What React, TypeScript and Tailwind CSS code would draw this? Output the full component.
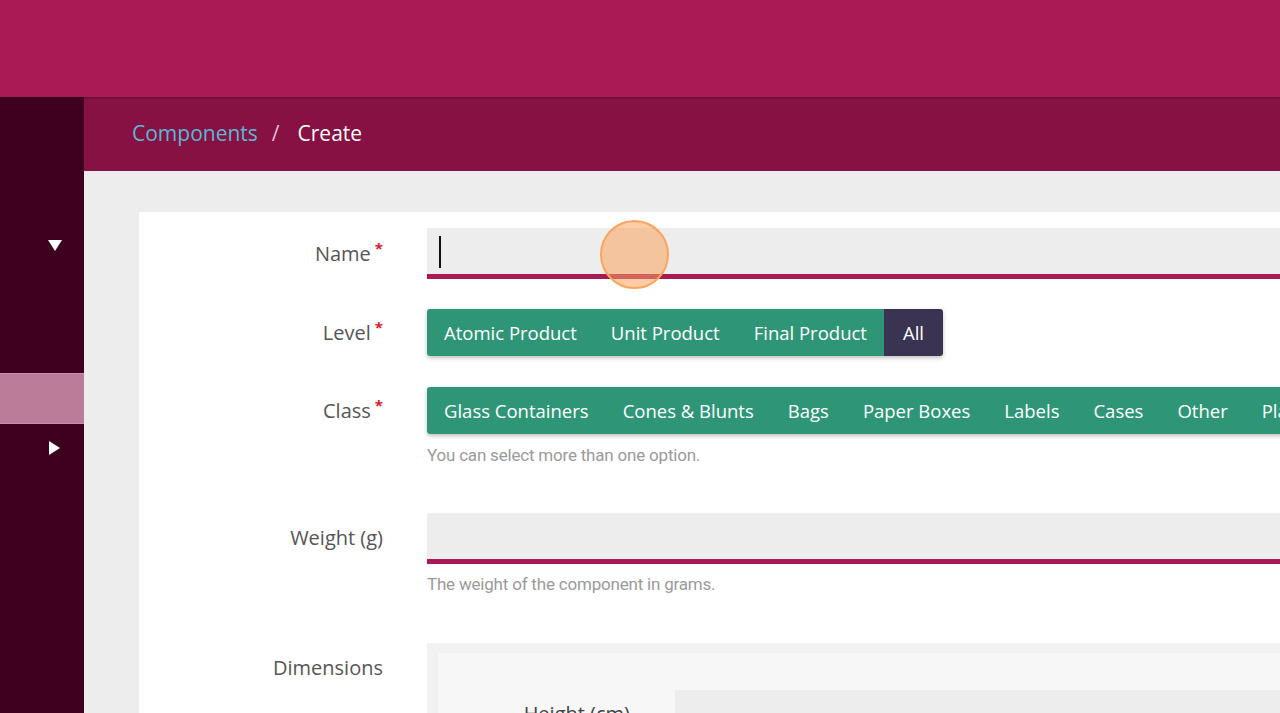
import React from "react";

const font = { fontFamily: '"Open Sans", "Liberation Sans", sans-serif' };

function Label({ text, required }: { text: string; required?: boolean }) {
  return (
    <div className="w-[288px] shrink-0 pr-[44px] text-right text-[20px] text-[#555555] leading-none">
      {text}
      {required && <span className="relative top-[-7px] ml-[4px] text-[15px] font-bold text-[#e0161e]">*</span>}
    </div>
  );
}

function Input({ cursor }: { cursor?: boolean }) {
  return (
    <div className="flex-1 h-[51px] bg-[#ededed] border-b-[5px] border-[#a91a54] flex items-center pl-[12px]">
      {cursor && <div className="w-[2px] h-[32px] bg-[#111] mt-[2px]" />}
    </div>
  );
}

function Group({ items, dark }: { items: string[]; dark?: string }) {
  return (
    <div className="flex h-[47px] rounded-[3px] overflow-hidden shadow-[0_2px_4px_rgba(0,0,0,0.25)] shrink-0 whitespace-nowrap">
      {items.map((t) => (
        <div key={t} className="bg-[#2e9676] text-white text-[18.5px] px-[17px] flex items-center">
          {t}
        </div>
      ))}
      {dark && (
        <div className="bg-[#3a3352] text-white text-[18.5px] px-[19px] flex items-center">{dark}</div>
      )}
    </div>
  );
}

const helper = { fontFamily: '"Roboto", sans-serif' };

export default function App() {
  return (
    <div style={font} className="w-[1280px] h-[713px] overflow-hidden relative bg-[#ededed]">
      <div className="h-[97px] bg-[#aa1a55] shadow-[0_1px_2px_rgba(0,0,0,0.3)] relative z-10" />
      <div className="flex h-[616px]">
        <aside className="w-[84px] shrink-0 bg-[#3f0020] relative">
          <div className="absolute left-[48px] top-[143px] w-0 h-0 border-l-[7px] border-r-[7px] border-t-[11px] border-l-transparent border-r-transparent border-t-white" />
          <div className="absolute left-0 right-0 top-[276px] h-[51px] bg-[#bb7c99] border-y border-[#c98fa9]" />
          <div className="absolute left-[49px] top-[344px] w-0 h-0 border-t-[7px] border-b-[7px] border-l-[11px] border-t-transparent border-b-transparent border-l-white" />
        </aside>
        <main className="flex-1 flex flex-col min-w-0">
          <div className="h-[74px] bg-[#861142] flex items-center pl-[48px] text-[21px] shrink-0">
            <span className="text-[#5bb8d5]">Components</span>
            <span className="text-[#e3bfcf] ml-[14px] mr-[18px]">/</span>
            <span className="text-white">Create</span>
          </div>
          <div className="flex-1 pl-[55px] pt-[41px] overflow-hidden">
            <div className="bg-white h-full pt-[16px] relative">
              <div className="flex items-center">
                <Label text="Name" required />
                <Input cursor />
              </div>
              <div className="flex items-center mt-[30px]">
                <Label text="Level" required />
                <Group items={["Atomic Product", "Unit Product", "Final Product"]} dark="All" />
              </div>
              <div className="flex items-center mt-[31px]">
                <Label text="Class" required />
                <Group items={["Glass Containers", "Cones & Blunts", "Bags", "Paper Boxes", "Labels", "Cases", "Other", "Plastic"]} />
              </div>
              <div className="pl-[288px] mt-[9px] text-[17px] text-[#9a9a9a] tracking-[-0.2px]" style={helper}>
                You can select more than one option.
              </div>
              <div className="flex items-center mt-[44px]">
                <Label text="Weight (g)" />
                <Input />
              </div>
              <div className="pl-[288px] mt-[8px] text-[17px] text-[#9a9a9a] tracking-[-0.2px]" style={helper}>
                The weight of the component in grams.
              </div>
              <div className="flex mt-[46px]">
                <div className="w-[288px] shrink-0 pr-[44px] pt-[10px] text-right text-[20px] text-[#555555]">Dimensions</div>
                <div className="flex-1 bg-[#f2f2f2] pl-[11px] pt-[10px]">
                  <div className="bg-[#f7f7f7] h-[200px] pt-[37px] flex">
                    <div className="w-[237px] shrink-0 pr-[45px] pt-[9px] text-right text-[20px] text-[#444]">Height (cm)</div>
                    <div className="flex-1 h-[51px] bg-[#ededed]" />
                  </div>
                </div>
              </div>
              <div className="absolute left-[461px] top-[8px] w-[69px] h-[69px] rounded-full bg-[#f7a35c]/55 border-2 border-[#fba55c]" />
            </div>
          </div>
        </main>
      </div>
    </div>
  );
}
